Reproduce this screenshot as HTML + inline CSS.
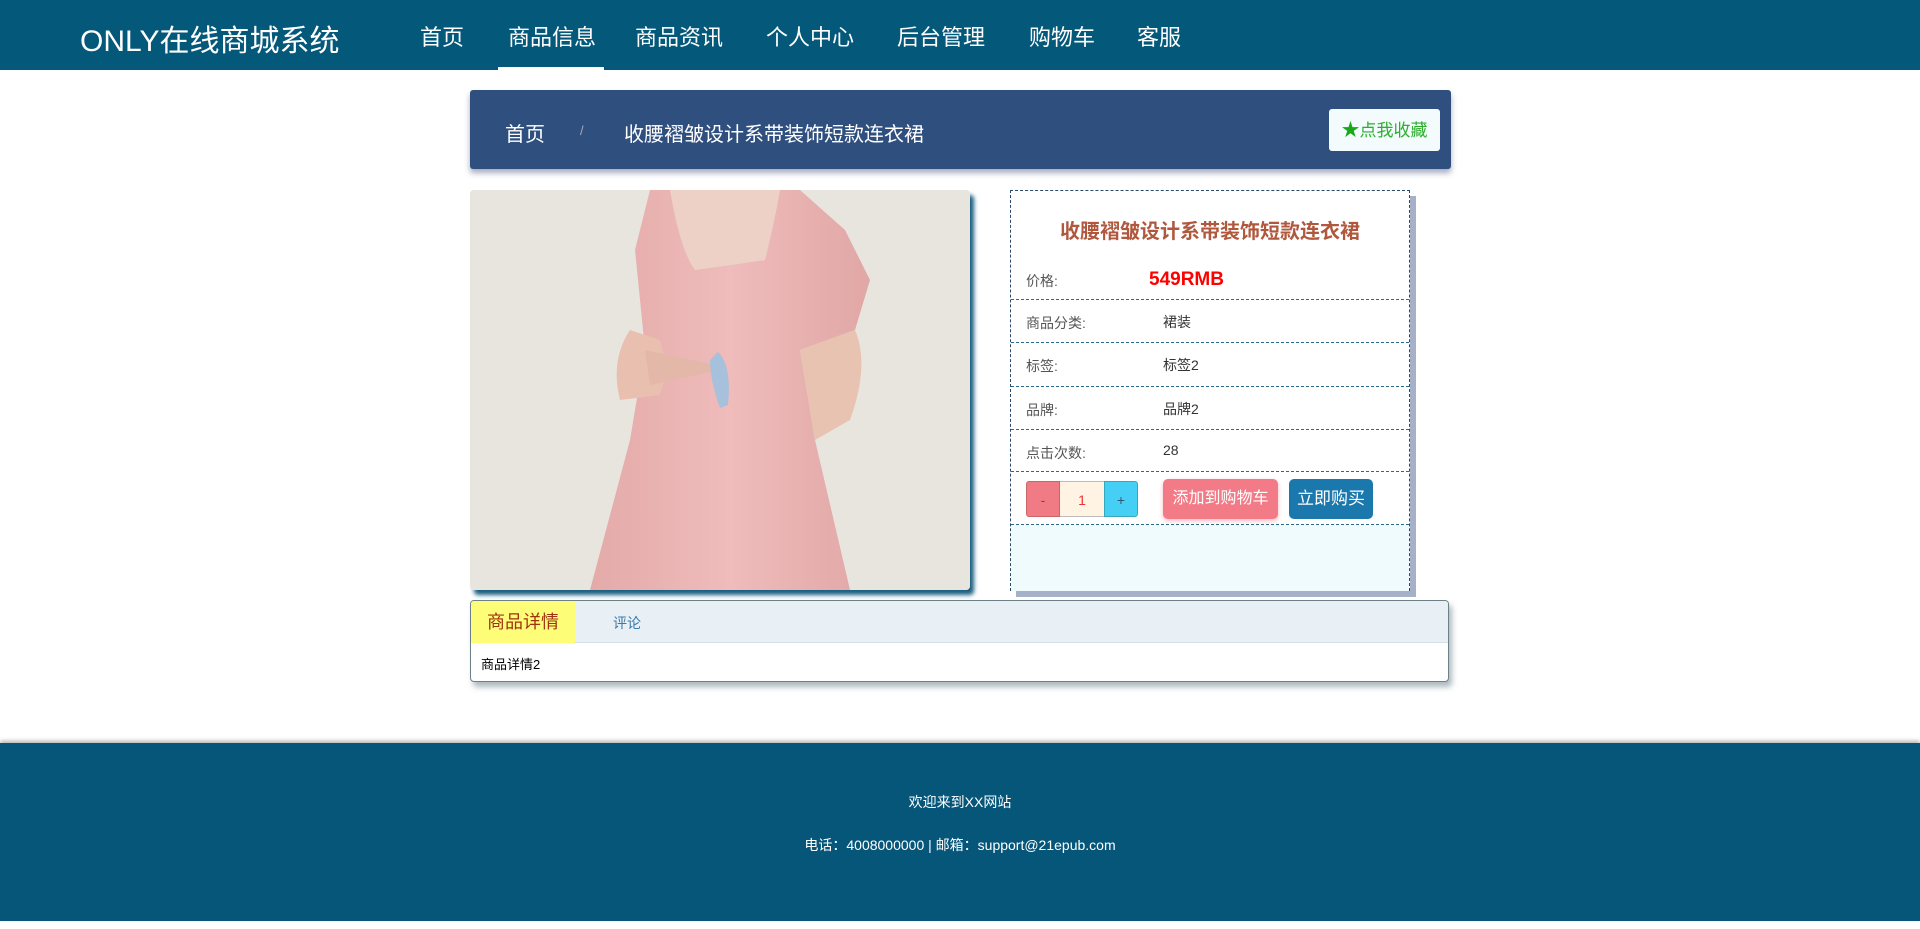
<!DOCTYPE html>
<html><head><meta charset="utf-8"><style>
*{margin:0;padding:0;box-sizing:border-box}
body{width:1920px;height:929px;background:#fff;font-family:"Liberation Sans","Noto Sans CJK SC",sans-serif;position:relative;overflow:hidden}
.nav{position:absolute;left:0;top:0;width:1920px;height:70px;background:#04587a}
.logo{position:absolute;left:80px;top:16px;color:#fff;font-size:30px}
.ni{position:absolute;top:20px;color:#fff;font-size:22px}
.act{position:absolute;left:498px;top:67px;width:106px;height:3px;background:#fff}
.bc{position:absolute;left:470px;top:90px;width:981px;height:79px;background:#2f4f7f;border-radius:3px;box-shadow:0 4px 6px rgba(80,90,130,.5)}
.bc span{position:absolute;top:28px;color:#fff;font-size:20px}
.fav{position:absolute;left:859px;top:19px;width:111px;height:42px;background:#f3fbfc;border-radius:3px;color:#2cae2c;font-size:17px;line-height:42px;text-align:center}
.img{position:absolute;left:470px;top:190px;width:500px;height:400px;border-radius:4px;overflow:hidden;background:#e9e6e1;box-shadow:4px 5px 4px #1a5f80}
.info{position:absolute;left:1010px;top:190px;width:400px;height:401px;border:1px dashed #2a4a6a;box-shadow:6px 6px 0 #a6b0c8;background:#fff}
.ttl{position:absolute;left:0;width:100%;top:24px;text-align:center;font-size:20px;font-weight:bold;color:#b0583e}
.row{position:absolute;left:0;width:100%;border-bottom:1px dashed #2a6a8a;font-size:14px;color:#555}
.row .l{position:absolute;left:15px}
.row .v{position:absolute;left:152px;color:#333}
.bot{position:absolute;left:0;top:334px;width:100%;height:66px;background:#f0fbfd}
.q{position:absolute;top:290px;height:36px;font-size:14px;text-align:center;line-height:36px}
.tabs{position:absolute;left:470px;top:600px;width:979px;height:82px;border:1px solid #6d8088;border-radius:4px;box-shadow:3px 5px 6px rgba(120,140,150,.6);overflow:hidden;background:#fff}
.th{height:42px;background:#e8eff5;border-bottom:1px solid #d8dfe5;position:relative}
.foot{position:absolute;left:0;top:743px;width:1920px;height:178px;background:#06567a;box-shadow:0 -2px 4px rgba(0,0,0,.3);color:#fff;font-size:14px;text-align:center}
</style></head><body>
<div class="nav">
<div class="logo">ONLY在线商城系统</div>
<div class="ni" style="left:420px">首页</div>
<div class="ni" style="left:508px">商品信息</div>
<div class="ni" style="left:635px">商品资讯</div>
<div class="ni" style="left:766px">个人中心</div>
<div class="ni" style="left:897px">后台管理</div>
<div class="ni" style="left:1029px">购物车</div>
<div class="ni" style="left:1137px">客服</div>
<div class="act"></div>
</div>
<div class="bc">
<span style="left:35px">首页</span>
<span style="left:110px;font-size:13px;top:33px;color:#aab">/</span>
<span style="left:154px">收腰褶皱设计系带装饰短款连衣裙</span>
<div class="fav"><span style="position:static;color:#1aa81a;font-size:18px">★</span>点我收藏</div>
</div>
<div class="img">
<svg width="500" height="400" viewBox="0 0 500 400">
<defs><linearGradient id="g" x1="0" x2="1"><stop offset="0" stop-color="#e3aaa8"/><stop offset=".5" stop-color="#efbcbb"/><stop offset="1" stop-color="#e0a7a5"/></linearGradient></defs>
<rect width="500" height="400" fill="#e8e5df"/>
<path d="M180 0 L165 60 L175 160 L160 250 L120 400 L380 400 L345 250 L330 160 L385 140 L400 90 L375 40 L330 0 L310 0 L295 70 L225 80 L200 0Z" fill="url(#g)"/>
<path d="M200 0 Q210 60 225 80 L295 70 Q305 30 310 0Z" fill="#edd0c6"/>
<path d="M160 140 Q140 170 150 210 L190 205 Q200 180 190 150Z" fill="#e9bfb0"/>
<path d="M175 160 L245 175 L250 180 L180 195Z" fill="#e4b8a8"/>
<path d="M248 162 Q262 175 258 215 L250 218 Q240 190 240 170Z" fill="#a7c0db"/>
<path d="M330 160 L385 140 Q400 175 380 230 L345 250Z" fill="#e9c3b2"/>
</svg>
</div>
<div class="info">
<div class="ttl">收腰褶皱设计系带装饰短款连衣裙</div>
<div class="row" style="top:66px;height:43px"><span class="l" style="top:14px">价格:</span><span class="v" style="left:138px;top:12px;color:#f00;font-size:19px;font-weight:bold">549RMB</span></div>
<div class="row" style="top:109px;height:43px"><span class="l" style="top:13px">商品分类:</span><span class="v" style="top:12px">裙装</span></div>
<div class="row" style="top:152px;height:44px"><span class="l" style="top:13px">标签:</span><span class="v" style="top:12px">标签2</span></div>
<div class="row" style="top:196px;height:43px"><span class="l" style="top:13px">品牌:</span><span class="v" style="top:12px">品牌2</span></div>
<div class="row" style="top:239px;height:42px"><span class="l" style="top:13px">点击次数:</span><span class="v" style="top:12px">28</span></div>
<div class="row" style="top:281px;height:53px;border-bottom:1px dashed #2a6a8a"></div>
<div class="bot"></div>
<div class="q" style="left:15px;width:34px;background:#f07b84;color:#a33;border-radius:3px 0 0 3px;border:1px solid #c66">-</div>
<div class="q" style="left:49px;width:44px;background:#fff3e3;color:#e33;border-top:1px solid #bbb;border-bottom:1px solid #bbb">1</div>
<div class="q" style="left:93px;width:34px;background:#45cff5;color:#357;border-radius:0 3px 3px 0;border:1px solid #3ab">+</div>
<div class="q" style="left:152px;width:115px;height:40px;top:288px;line-height:40px;background:#f27b87;color:#fff;font-size:16px;border-radius:5px;box-shadow:0 2px 4px rgba(240,120,130,.5)">添加到购物车</div>
<div class="q" style="left:278px;width:84px;height:40px;top:288px;line-height:40px;background:#1b78ad;color:#fff;font-size:17px;border-radius:5px">立即购买</div>
</div>
<div class="tabs">
<div class="th"><div style="position:absolute;left:0;top:0;width:104px;height:42px;background:#fdfd78;color:#a0320f;font-size:18px;line-height:42px;text-align:center">商品详情</div><div style="position:absolute;left:142px;top:12px;font-size:14px;color:#3a7aa8">评论</div></div>
<div style="padding:11px 10px;font-size:13px;color:#000">商品详情2</div>
</div>
<div class="foot">
<div style="position:absolute;top:49px;width:100%">欢迎来到XX网站</div>
<div style="position:absolute;top:92px;width:100%">电话：4008000000 | 邮箱：support@21epub.com</div>
</div>
</body></html>
